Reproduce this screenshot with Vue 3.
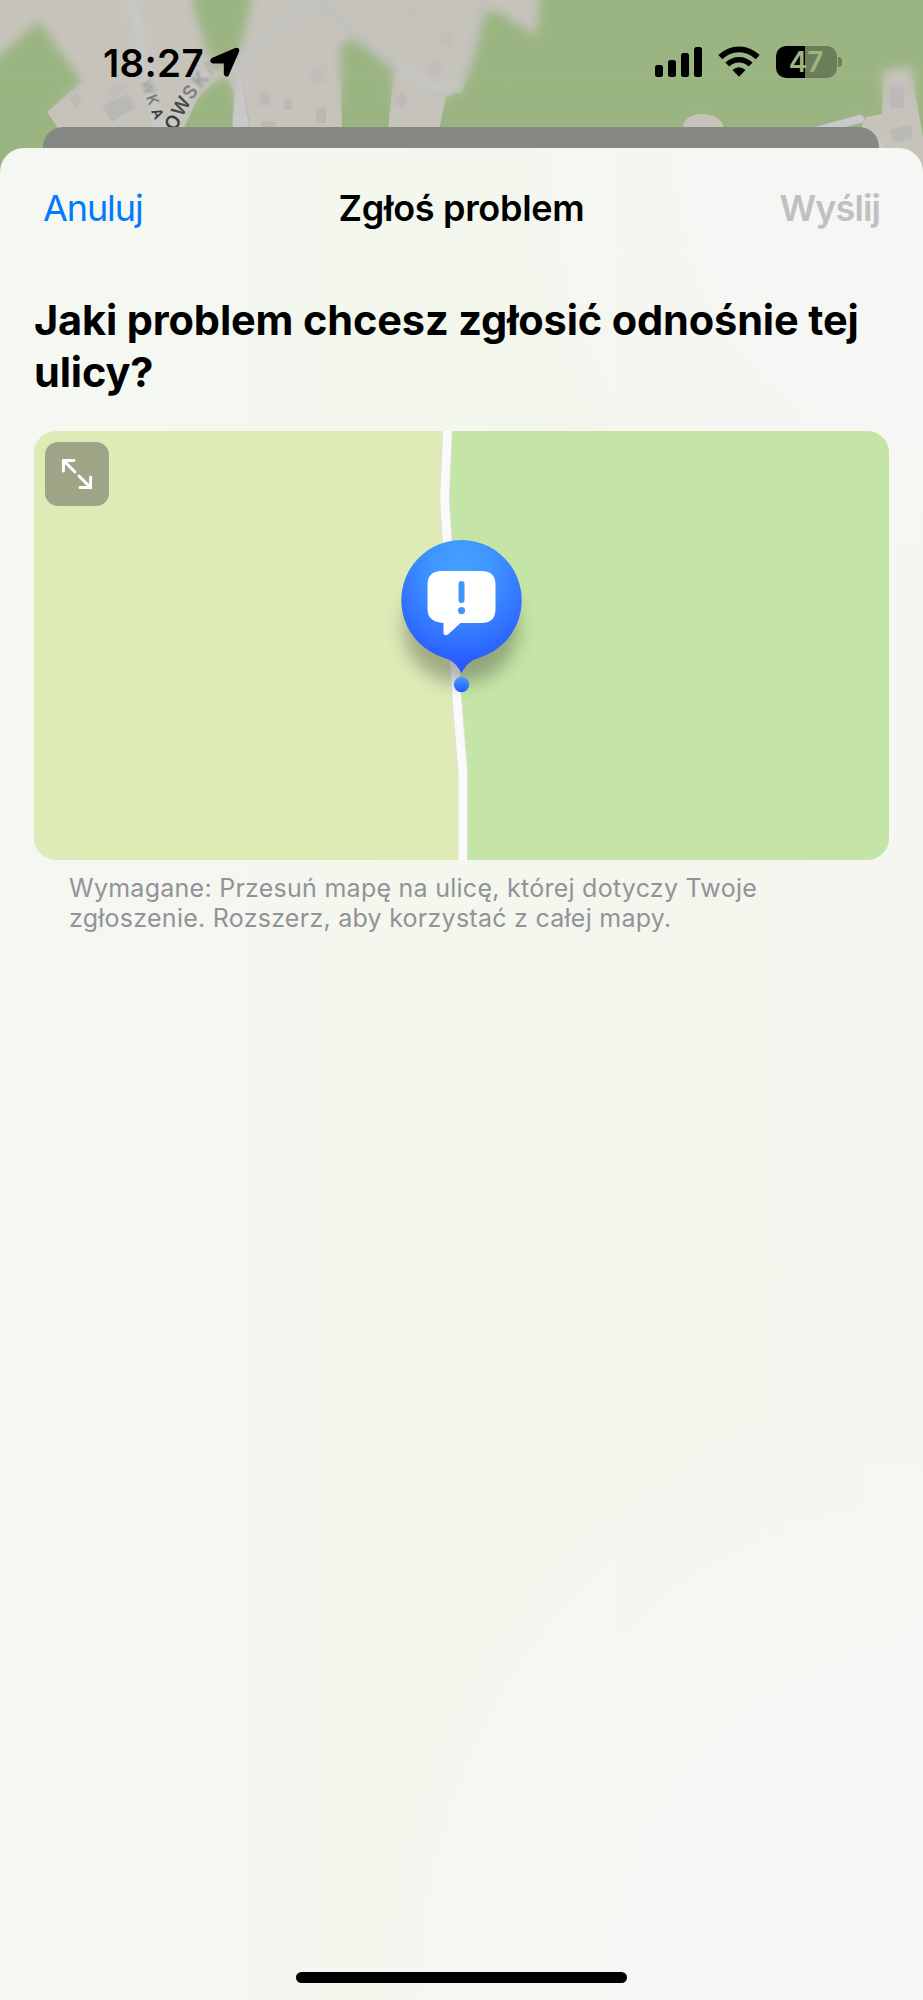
<script setup>
const bars = [
  { x: 0, h: 12 },
  { x: 13, h: 17 },
  { x: 26, h: 24 },
  { x: 39, h: 30 },
]
const layers = ['sharp', 'soft']
</script>

<template>
  <main class="phone">
    <svg class="backdrop" viewBox="0 0 923 180" width="923" height="180" aria-hidden="true">
      <defs>
        <filter id="soften" x="-40" y="-40" width="1003" height="260" filterUnits="userSpaceOnUse">
          <feGaussianBlur stdDeviation="5" />
        </filter>
        <linearGradient id="fade" x1="0" y1="0" x2="0" y2="180" gradientUnits="userSpaceOnUse">
          <stop offset=".4" stop-color="#fff" />
          <stop offset=".64" stop-color="#000" />
        </linearGradient>
        <mask id="fadeMask"><rect width="923" height="180" fill="url(#fade)" /></mask>
      </defs>
      <g v-for="l in layers" :key="l" :mask="l === 'soft' ? 'url(#fadeMask)' : null">
        <g :filter="l === 'soft' ? 'url(#soften)' : null">
          <rect x="-40" y="-40" width="1003" height="260" fill="#c6c3bb" />
          <path d="M-40 84L0 54L39 21L82 81L47 112L58 128V220H-40Z" fill="#9bb582" />
          <path d="M187-40L194 10L207 52L222 70L240 52L250 10L258-40Z" fill="#9bb582" />
          <path d="M183 130L197 100Q206 85 226 76L234 92V130Z" fill="#9bb582" />
          <path d="M340 48Q350 30 372 52L394 68L388 130H342Z" fill="#9bb582" />
          <path d="M487-40L483 14Q500 6 510 20L536 34L543-40H980V220H440V126L446 97L462 92L472 60Z" fill="#9bb582" />
          <path d="M210 68L160 135M130-10L158 128" stroke="#c8c8c6" stroke-width="11" fill="none" />
          <path d="M300-20L346 27L395 65L432 87Q452 97 461 82Q473 50 487-20" stroke="#c0c1bd" stroke-width="9" fill="none" />
          <path d="M398 66L430 85Q450 95 457 85" stroke="#c8c9c6" stroke-width="5" fill="none" stroke-linecap="round" />
          <path d="M238 60Q270 30 330-8" stroke="#c3c3c1" stroke-width="12" fill="none" />
          <path d="M236 64L232 130H250L240 64Z" fill="#c9c9c9" stroke="#b4b4b4" />
          <g fill="#b8b8b7">
            <path d="M102 106L127 94L136 107L112 122Z" />
            <path d="M107 92L124 81L128 87L113 98Z" opacity=".6" />
            <path d="M69 99L77 94L82 101L75 107Z" />
            <path d="M260 93h10v12h-10zM284 98h8v12h-8zM262 121l14 1v8h-14zM316 108h10v15h-10zM313 69h10v13h-10zM401 93l7 6-7 9-6-8zM431 62l10 3-3 10-9-3zM444 33l9 3-3 9-9-3z" />
            <path d="M258 66h8v11h-8zM318 4h9v12h-9zM405 4h11v12h-11zM155 20h9v9h-9zM89 30h9v9h-9z" opacity=".35" />
          </g>
          <path d="M682 130Q684 114 703 114Q723 115 724 130Z" fill="#c6c3bb" />
          <path d="M883 71L911 67L926 155V180H886L862 130V118L882 114Z" fill="#c6c3bb" />
          <path d="M815 131L860 119" stroke="#aaabac" stroke-width="10" stroke-linecap="round" />
          <path d="M815 131L860 119" stroke="#cacacb" stroke-width="8" stroke-linecap="round" />
          <path d="M878 139L888 160" stroke="#c9c9ca" stroke-width="4" />
          <path d="M890 85L904 84L904 108L890 108ZM890 130L911 124L913 138L893 143Z" fill="#bab9b8" />
        </g>
      </g>
      <g class="street">
        <text transform="translate(141 82) rotate(72)" font-size="14" opacity=".35" class="hazy">W</text>
        <text transform="translate(146 97) rotate(70)" font-size="14" opacity=".6" class="haze">K</text>
        <text transform="translate(151 111) rotate(66)" font-size="14">A</text>
        <text transform="translate(175 132) rotate(-60)" font-size="19">O</text>
        <text transform="translate(182 118) rotate(-60)" font-size="19" opacity=".9">W</text>
        <text transform="translate(192 101) rotate(-55)" font-size="19" opacity=".55" class="haze">S</text>
        <text transform="translate(201 89) rotate(-50)" font-size="19" opacity=".35" class="hazy">K</text>
        <text transform="translate(211 77) rotate(-48)" font-size="19" opacity=".15" class="hazy">A</text>
      </g>
    </svg>

    <header class="status">
      <div class="clock">
        <span class="time">18:27</span>
        <svg width="30" height="31" viewBox="0 0 30 31">
          <path d="M2.3 12.2L25.7 2.1Q28.6 1.4 27.9 4.2L17.6 28Q16 29 15 27V15.3H3Q.2 14.2 2.3 12.2Z" stroke="#000" stroke-width="2.4" stroke-linejoin="round" />
        </svg>
      </div>
      <div class="indicators">
        <svg class="signal" width="47" height="30" viewBox="0 0 47 30">
          <rect v-for="b in bars" :key="b.x" :x="b.x" :y="30 - b.h" width="8" :height="b.h" rx="2.5" />
        </svg>
        <svg class="wifi" width="42" height="31" viewBox="0 0 42 31">
          <path d="M2.3 11.2Q10.4 3.4 21 3.4T39.7 11.2" fill="none" stroke="#000" stroke-width="5.8" />
          <path d="M9.3 18.5Q14.3 13.7 21 13.7T32.7 18.5" fill="none" stroke="#000" stroke-width="5.6" />
          <path d="M14.5 24Q21 18.6 27.5 24L21 30.8Z" />
        </svg>
        <div class="battery"><span>47</span></div>
        <i class="tip"></i>
      </div>
    </header>

    <div class="rear-sheet"></div>
    <section class="sheet">
      <nav class="nav">
        <button class="cancel">Anuluj</button>
        <h1>Zgłoś problem</h1>
        <button class="send" disabled>Wyślij</button>
      </nav>
      <h2>Jaki problem chcesz zgłosić odnośnie tej<br />ulicy?</h2>
      <div class="map">
        <svg width="855" height="429" viewBox="0 0 855 429">
          <defs>
            <radialGradient id="pin" cx=".5" cy=".2" r=".82">
              <stop offset="0" stop-color="#45a0ff" />
              <stop offset=".3" stop-color="#4096ff" />
              <stop offset=".72" stop-color="#306fff" />
              <stop offset="1" stop-color="#244cff" />
            </radialGradient>
            <linearGradient id="dot" x1="0" y1="0" x2="0" y2="1">
              <stop stop-color="#459cff" /><stop offset="1" stop-color="#255cff" />
            </linearGradient>
            <filter id="shade" x="-40%" y="-40%" width="180%" height="180%"><feGaussianBlur stdDeviation="9" /></filter>
          </defs>
          <rect width="855" height="429" fill="#deebb6" />
          <path d="M413 0L411 68L427 340V429H855V0Z" fill="#c4e5a5" />
          <path d="M413.5 -2L410.5 68L423 270L428.7 340V431" fill="none" stroke="#dedfdc" stroke-width="10.5" />
          <path d="M413.5 -2L410.5 68L423 270L428.7 340V431" fill="none" stroke="#fafafa" stroke-width="8.6" />
          <ellipse cx="427" cy="196" rx="57" ry="56" fill="#4a5040" opacity=".42" filter="url(#shade)" />
          <path d="M427.5 242C422 232 417 229 409 226.5A60.2 60.2 0 1 1 446 226.5C438 229 433 232 427.5 242Z" fill="url(#pin)" />
          <path d="M407 140H441Q455 140 455 154V178Q455 192 441 192H420L407.5 203.5Q403 206 403 201V192Q387 191 387 178V154Q387 140 401 140Z" transform="translate(6.5 0)" fill="#fff" />
          <path d="M427.5 153V169" stroke="#4096ff" stroke-width="6" stroke-linecap="round" />
          <circle cx="427.5" cy="179.6" r="3.6" fill="#4096ff" />
          <circle cx="427.5" cy="253.5" r="7.7" fill="url(#dot)" />
        </svg>
        <button class="expand" aria-label="Rozszerz">
          <svg width="32" height="32" viewBox="0 0 32 32" fill="none" stroke="#fff" stroke-width="3" stroke-linecap="round" stroke-linejoin="round">
            <path d="M14 14L2.4 2.4M2.4 13V2.4H13M18 18L29.6 29.6M29.6 19V29.6H19" />
          </svg>
        </button>
      </div>
      <p class="hint">Wymagane: Przesuń mapę na ulicę, której dotyczy Twoje<br /><span>zgłoszenie. Rozszerz, aby korzystać z całej mapy.</span></p>
      <div class="home"></div>
    </section>
  </main>
</template>

<style>
body { margin: 0; }
</style>

<style scoped>
.phone { position: relative; width: 923px; height: 2000px; overflow: hidden; background: #9bb582; font-family: Inter, "Liberation Sans", sans-serif; display: flex; flex-direction: column; }
.backdrop { position: absolute; top: 0; left: 0; }
.street text { font-family: Inter, sans-serif; font-weight: 600; fill: #3c3c3c; }
.haze { filter: blur(.7px); }
.hazy { filter: blur(1.5px); }
.status { position: relative; height: 127px; flex: none; display: flex; justify-content: space-between; box-sizing: border-box; padding: 46px 81px 0 103px; }
.clock { display: flex; align-items: flex-start; gap: 7px; }
.clock svg { margin-top: 1px; }
.time { width: 100px; font-size: 38.5px; line-height: 34px; font-weight: 600; letter-spacing: .3px; white-space: nowrap; }
.indicators { display: flex; align-items: flex-start; }
.signal { margin-top: 1px; }
.wifi { margin: 0 16px 0 15.5px; }
.battery { width: 61px; height: 32px; border-radius: 10px; background: linear-gradient(90deg, #000 29px, #6c7e59 29px); color: #9bb582; font-size: 28px; font-weight: 600; line-height: 33px; text-align: center; letter-spacing: -.2px; }
.tip { width: 4px; height: 10px; margin: 11px 0 0 1.5px; border-radius: 0 4px 4px 0; background: #6c7e59; }
.rear-sheet { position: relative; flex: none; height: 41px; margin: 0 44px -20px 43px; border-radius: 20px 20px 0 0; background: #868883; }
.sheet { position: relative; flex: 1; display: flex; flex-direction: column; border-radius: 24px 24px 0 0; background: radial-gradient(ellipse 560px 620px at 100% 100%, #f7f7f6 40%, transparent), radial-gradient(ellipse 420px 500px at 100% 0, #f6f6f5 40%, transparent), linear-gradient(90deg, #f5f7f2 0, #f4f7ee 40%, #f4f6ee 80%, #f5f6f0); }
.nav { height: 120px; flex: none; display: grid; grid-template-columns: 1fr auto 1fr; align-items: center; padding: 0 43px; }
button { border: 0; padding: 0; margin: 0; background: none; font: inherit; }
.nav button, .nav h1 { margin: 0; font-size: 36px; line-height: 44px; white-space: nowrap; }
.cancel { justify-self: start; color: #007aff; letter-spacing: -1.1px; }
.nav h1 { font-weight: 600; letter-spacing: -.3px; }
.nav .send { justify-self: end; color: #c0c0bf; font-weight: 600; letter-spacing: -.9px; }
h2 { margin: 26px 0 0 34px; font-size: 41.5px; line-height: 52px; font-weight: 700; letter-spacing: -.14px; white-space: nowrap; }
.map { position: relative; width: 855px; height: 429px; margin: 33px 34px 0; border-radius: 22px; overflow: hidden; flex: none; }
.map > svg { display: block; }
.expand { position: absolute; left: 11px; top: 11px; width: 64px; height: 64px; border-radius: 13px; background: #9ea486; display: grid; place-items: center; }
.hint { margin: 13px 0 0 69px; color: #929398; font-size: 25px; line-height: 30px; letter-spacing: .26px; white-space: nowrap; }
.home { width: 331px; height: 11px; border-radius: 6px; background: #000; margin: auto auto 17px; }
</style>
